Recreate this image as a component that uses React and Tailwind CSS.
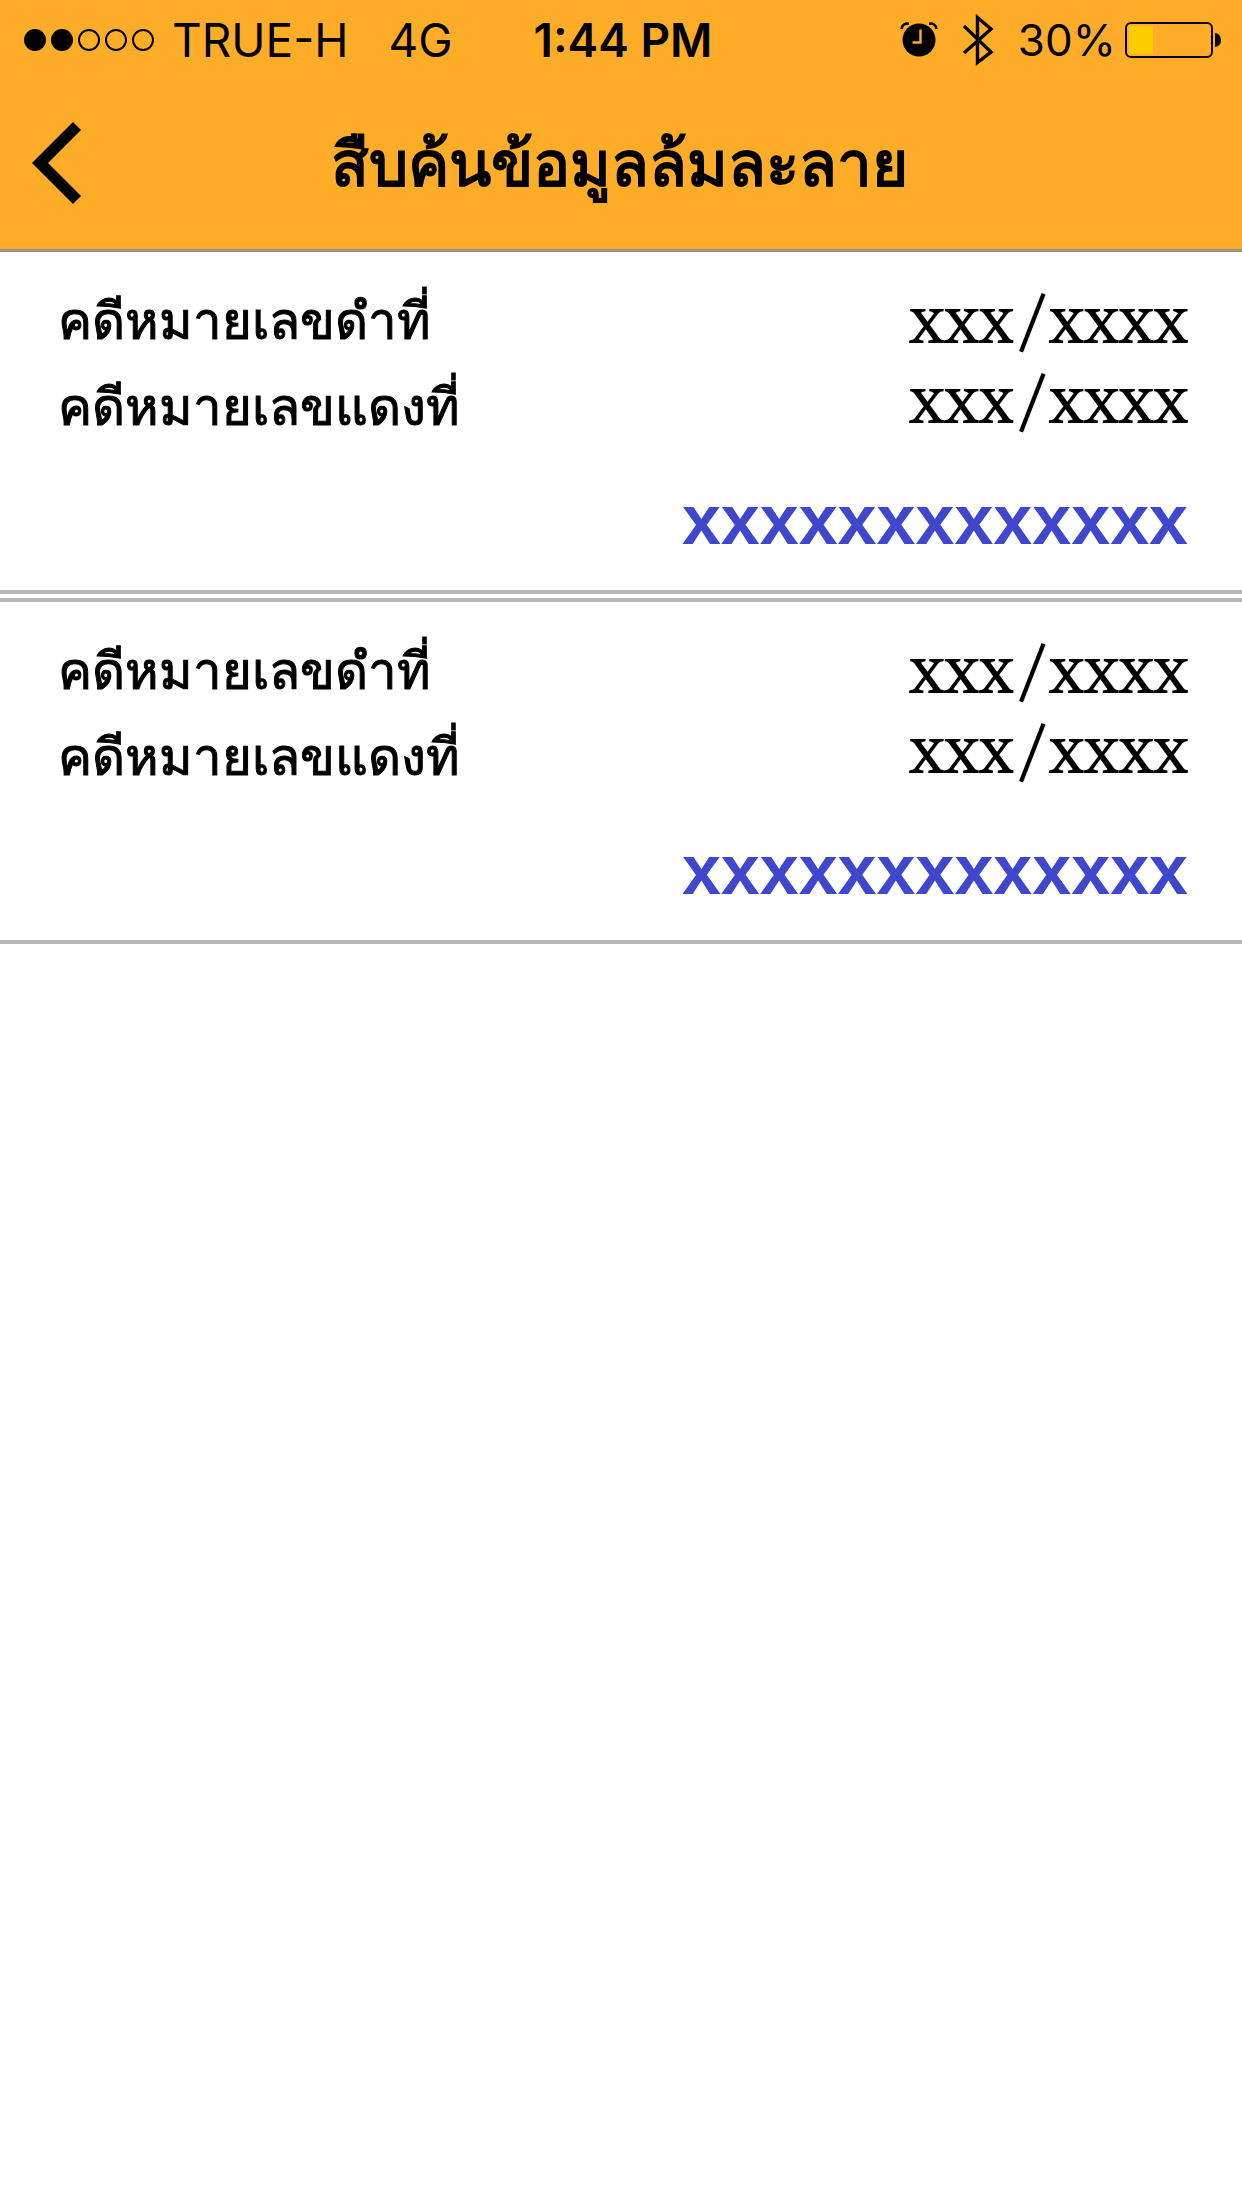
const cases = [
  { id: 1, black: "xxx/xxxx", red: "xxx/xxxx", name: "xxxxxxxxxxxxx" },
  { id: 2, black: "xxx/xxxx", red: "xxx/xxxx", name: "xxxxxxxxxxxxx" },
];

const StatusBar = () => (
  <div className="h-20 pl-6 pr-5 flex items-center text-[46px] font-['Inter',sans-serif]">
    <div className="flex-1 flex items-center">
      <svg className="w-[132px] h-[26px] mr-4" viewBox="0 0 132 26" stroke="#000" strokeWidth="2">
        <circle cx="11" cy="13" r="10" />
        <circle cx="38" cy="13" r="10" />
        <circle cx="65" cy="13" r="10" fill="none" />
        <circle cx="92" cy="13" r="10" fill="none" />
        <circle cx="119" cy="13" r="10" fill="none" />
      </svg>
      <span>TRUE-H</span>
      <span className="ml-10">4G</span>
    </div>
    <span className="font-semibold">1:44 PM</span>
    <div className="flex-1 flex items-center justify-end">
      {/* alarm */}
      <svg className="w-[38px] h-[36px] mr-6" viewBox="0 0 38 36">
        <circle cx="19" cy="18" r="16.5" />
        <path d="M1.5 7 C2 3 5 1 9 1.7" fill="none" stroke="#000" strokeWidth="2.4" />
        <path d="M36.5 7 C36 3 33 1 29 1.7" fill="none" stroke="#000" strokeWidth="2.4" />
        <path d="M20.5 7.5 V20.5 H12.5" fill="none" stroke="#ffad29" strokeWidth="2.4" />
      </svg>
      {/* bluetooth */}
      <svg className="w-[32px] h-[52px] mr-6" viewBox="0 0 32 52" fill="none" stroke="#000" strokeWidth="3.4">
        <path d="M2 12 L29 38 L15.5 48.5 V3.5 L29 15 L2 39" />
      </svg>
      <span className="text-[44px]">30%</span>
      {/* battery */}
      <svg className="w-[98px] h-[38px] ml-2" viewBox="0 0 98 38">
        <rect x="2" y="2" width="86" height="34" rx="5" fill="none" stroke="#000" strokeWidth="2" />
        <rect x="5" y="5" width="24" height="28" rx="2" fill="#ffcc00" />
        <path d="M91 12 Q97 13 97 19 Q97 25 91 26 Z" />
      </svg>
    </div>
  </div>
);

const CaseItem = ({ item }) => (
  <section className="border-b-4 border-[#b7b7b7] not-first:border-t-4 pl-[58px] pr-[54px] pt-6 pb-[30px] flex justify-between">
    <div className="text-[51px] leading-[86px] [-webkit-text-stroke:1px]">
      <p>คดีหมายเลขดำที่</p>
      <p>คดีหมายเลขแดงที่</p>
    </div>
    <div className="flex flex-col items-end pt-1 leading-[80px]">
      <p className="text-[72px] font-serif">{item.black}</p>
      <p className="text-[72px] font-serif">{item.red}</p>
      <a href="#" className="mt-10 text-[70px] font-bold text-[#3f48cc] font-['Liberation_Sans',sans-serif]">
        {item.name}
      </a>
    </div>
  </section>
);

const App = () => {
  return (
    <div className="min-h-screen bg-white text-black font-['Noto_Sans','Liberation_Sans',sans-serif]">
      <header className="bg-[#ffad29] border-b-3 border-[#98938c]">
        <StatusBar />
        <div className="flex items-center justify-between pl-8 pr-9 pb-1">
          <button className="w-[50px]" aria-label="กลับ">
            <svg className="w-[50px] h-[82px]" viewBox="0 0 50 82">
              <path d="M0 41 L41 0 L49 8 L16 41 L49 74 L41 82 Z" />
            </svg>
          </button>
          <h1 className="text-[62px] leading-[165px] font-bold">สืบค้นข้อมูลล้มละลาย</h1>
          <div className="w-[50px]"></div>
        </div>
      </header>
      <main className="flex flex-col gap-1">
        {cases.map((item) => (
          <CaseItem key={item.id} item={item} />
        ))}
      </main>
    </div>
  );
};

export default App;
